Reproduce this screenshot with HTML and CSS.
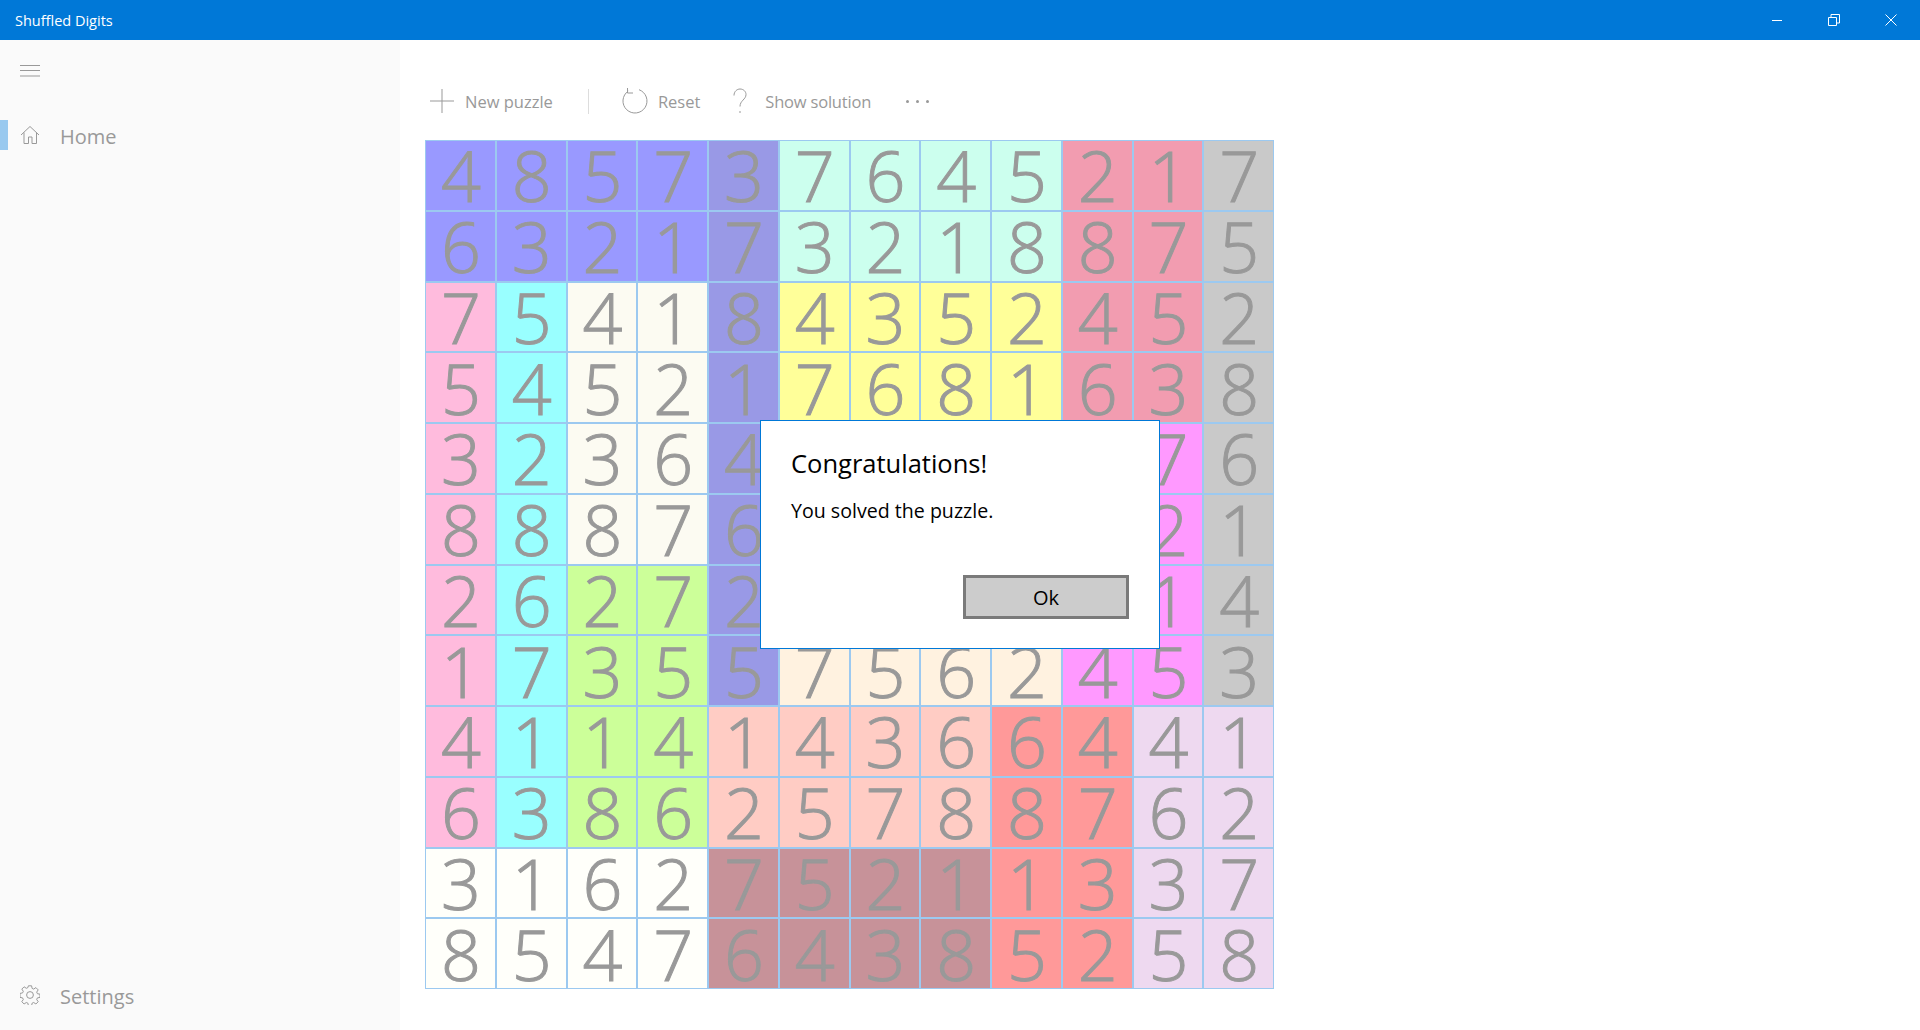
FILE: index.html
```html
<!DOCTYPE html>
<html lang="en">
<head>
  <meta charset="UTF-8">
  <title>Shuffled Digits</title>
  <link rel="stylesheet" href="styles.css">
</head>
<body>
  <div id="app">

    <!-- Title bar -->
    <div id="title-bar">
      <span class="app-name">Shuffled Digits</span>
      <div class="win-btns">
        <svg class="win-btn" viewBox="0 0 12 12"><path d="M1 6.5h10" /></svg>
        <svg class="win-btn" viewBox="0 0 12 12"><path d="M.5 3.500h8v8h-8z M3 3.500v-3h8.500v8.500h-3" /></svg>
        <svg class="win-btn" viewBox="0 0 12 12"><path d="M.5.5l11 11 M11.5.5l-11 11" /></svg>
      </div>
    </div>

    <div id="content">

      <!-- Navigation pane -->
      <div id="nav">
        <div class="nav-top">
          <svg class="hamburger" viewBox="0 0 20 12"><path d="M0 .5h20 M0 5.5h20 M0 11h20" /></svg>
          <div class="nav-item selected">
            <svg class="nav-icon" viewBox="0 0 20 20"><path d="M1 10L10 1.5 19 10 M4 7.5V18.500h4.500V12h3.500v6.500h4.500V7.500" /></svg>
            <span>Home</span>
          </div>
        </div>
        <div class="nav-item">
          <svg class="nav-icon" viewBox="0 0 20 20"><circle cx="10" cy="10" r="3.4" /><path d="M8.4.8h3.2l.5 2.600 1.600.7 2.200-1.500 2.300 2.300-1.500 2.200.7 1.600 2.600.5v3.200l-2.600.5-.7 1.600 1.500 2.200-2.300 2.300-2.200-1.500-1.600.7-.5 2.600H8.400l-.5-2.600-1.600-.7-2.200 1.500-2.300-2.300 1.500-2.200-.7-1.600-2.600-.5V8.400l2.600-.5.7-1.600-1.500-2.200 2.300-2.300 2.200 1.500 1.600-.7z" /></svg>
          <span>Settings</span>
        </div>
      </div>

      <!-- Main page -->
      <div id="main">
        <div id="toolbar">
          <div class="tool tool-new">
            <svg class="tool-icon" viewBox="0 0 26 26"><path d="M13 1v24 M1 13h24" /></svg>
            <span>New puzzle</span>
          </div>
          <div class="tool-sep"></div>
          <div class="tool tool-reset">
            <svg class="tool-icon" viewBox="0 0 26 26"><path d="M6.200 3.100A12 12 0 1 0 17 1.700 M5.500 0v5h5.500" /></svg>
            <span>Reset</span>
          </div>
          <div class="tool tool-help">
            <svg class="tool-icon" viewBox="0 0 26 26"><path d="M7 7.500C7 3.500 10 1 13 1c3.500 0 6 2.500 6 5.500 0 5-6 6-6 12" /><path d="M13 23v2" /></svg>
            <span>Show solution</span>
          </div>
          <div class="more"><i></i><i></i><i></i></div>
        </div>

        <div id="board">
          <div class="cell violet">4</div><div class="cell violet">8</div><div class="cell violet">5</div><div class="cell violet">7</div><div class="cell dusk">3</div><div class="cell mint">7</div><div class="cell mint">6</div><div class="cell mint">4</div><div class="cell mint">5</div><div class="cell rose">2</div><div class="cell rose">1</div><div class="cell grey">7</div>
          <div class="cell violet">6</div><div class="cell violet">3</div><div class="cell violet">2</div><div class="cell violet">1</div><div class="cell dusk">7</div><div class="cell mint">3</div><div class="cell mint">2</div><div class="cell mint">1</div><div class="cell mint">8</div><div class="cell rose">8</div><div class="cell rose">7</div><div class="cell grey">5</div>
          <div class="cell pink">7</div><div class="cell cyan">5</div><div class="cell ivory">4</div><div class="cell ivory">1</div><div class="cell dusk">8</div><div class="cell yellow">4</div><div class="cell yellow">3</div><div class="cell yellow">5</div><div class="cell yellow">2</div><div class="cell rose">4</div><div class="cell rose">5</div><div class="cell grey">2</div>
          <div class="cell pink">5</div><div class="cell cyan">4</div><div class="cell ivory">5</div><div class="cell ivory">2</div><div class="cell dusk">1</div><div class="cell yellow">7</div><div class="cell yellow">6</div><div class="cell yellow">8</div><div class="cell yellow">1</div><div class="cell rose">6</div><div class="cell rose">3</div><div class="cell grey">8</div>
          <div class="cell pink">3</div><div class="cell cyan">2</div><div class="cell ivory">3</div><div class="cell ivory">6</div><div class="cell dusk">4</div><div class="cell cream">1</div><div class="cell cream">8</div><div class="cell cream">3</div><div class="cell cream">7</div><div class="cell magenta">5</div><div class="cell magenta">7</div><div class="cell grey">6</div>
          <div class="cell pink">8</div><div class="cell cyan">8</div><div class="cell ivory">8</div><div class="cell ivory">7</div><div class="cell dusk">6</div><div class="cell cream">3</div><div class="cell cream">4</div><div class="cell cream">2</div><div class="cell cream">5</div><div class="cell magenta">1</div><div class="cell magenta">2</div><div class="cell grey">1</div>
          <div class="cell pink">2</div><div class="cell cyan">6</div><div class="cell lime">2</div><div class="cell lime">7</div><div class="cell dusk">2</div><div class="cell cream">8</div><div class="cell cream">1</div><div class="cell cream">4</div><div class="cell cream">3</div><div class="cell magenta">6</div><div class="cell magenta">1</div><div class="cell grey">4</div>
          <div class="cell pink">1</div><div class="cell cyan">7</div><div class="cell lime">3</div><div class="cell lime">5</div><div class="cell dusk">5</div><div class="cell cream">7</div><div class="cell cream">5</div><div class="cell cream">6</div><div class="cell cream">2</div><div class="cell magenta">4</div><div class="cell magenta">5</div><div class="cell grey">3</div>
          <div class="cell pink">4</div><div class="cell cyan">1</div><div class="cell lime">1</div><div class="cell lime">4</div><div class="cell salmon">1</div><div class="cell salmon">4</div><div class="cell salmon">3</div><div class="cell salmon">6</div><div class="cell red">6</div><div class="cell red">4</div><div class="cell lavender">4</div><div class="cell lavender">1</div>
          <div class="cell pink">6</div><div class="cell cyan">3</div><div class="cell lime">8</div><div class="cell lime">6</div><div class="cell salmon">2</div><div class="cell salmon">5</div><div class="cell salmon">7</div><div class="cell salmon">8</div><div class="cell red">8</div><div class="cell red">7</div><div class="cell lavender">6</div><div class="cell lavender">2</div>
          <div class="cell white">3</div><div class="cell white">1</div><div class="cell white">6</div><div class="cell white">2</div><div class="cell brown">7</div><div class="cell brown">5</div><div class="cell brown">2</div><div class="cell brown">1</div><div class="cell red">1</div><div class="cell red">3</div><div class="cell lavender">3</div><div class="cell lavender">7</div>
          <div class="cell white">8</div><div class="cell white">5</div><div class="cell white">4</div><div class="cell white">7</div><div class="cell brown">6</div><div class="cell brown">4</div><div class="cell brown">3</div><div class="cell brown">8</div><div class="cell red">5</div><div class="cell red">2</div><div class="cell lavender">5</div><div class="cell lavender">8</div>
        </div>
      </div>
    </div>

    <!-- Message dialog -->
    <div id="dialog">
      <div class="dialog-title">Congratulations!</div>
      <div class="dialog-text">You solved the puzzle.</div>
      <div class="dialog-actions">
        <button class="dialog-btn">Ok</button>
      </div>
    </div>

  </div>
</body>
</html>
```

FILE: styles.css
```css
html, body {
  margin: 0;
  padding: 0;
  height: 100%;
  background: #fff;
  overflow: hidden;
}

#app {
  position: relative;
  height: 100%;
  display: flex;
  flex-direction: column;
  font-family: "Open Sans", "Noto Sans", sans-serif;
}

/* title bar */
#title-bar {
  height: 40px;
  flex: none;
  display: flex;
  align-items: center;
  justify-content: space-between;
  background: #0078d7;
  color: #fff;
  padding-left: 15px;
}
.app-name {
  font-size: 14.5px;
}
.win-btns {
  display: flex;
  padding-right: 23px;
  gap: 45px;
}
.win-btn {
  width: 12px;
  height: 12px;
  fill: none;
  stroke: #fff;
  stroke-width: 1;
}

#content {
  flex: 1;
  display: flex;
  min-height: 0;
}

/* navigation pane */
#nav {
  width: 400px;
  flex: none;
  box-sizing: border-box;
  display: flex;
  flex-direction: column;
  justify-content: space-between;
  background: #fafafa;
  padding-bottom: 20px;
}
.hamburger {
  display: block;
  width: 20px;
  height: 12px;
  margin: 25px 0 43px 20px;
  fill: none;
  stroke: #999;
  stroke-width: 1;
}
.nav-item {
  position: relative;
  height: 30px;
  display: flex;
  align-items: center;
  gap: 20px;
  padding-left: 20px;
  font-size: 20px;
  color: #999;
}
.nav-item span {
  position: relative;
  top: 1px;
}
.nav-item.selected::before {
  content: "";
  position: absolute;
  left: 0;
  top: 0;
  bottom: 0;
  width: 8px;
  background: #99c9ef;
}
.nav-icon {
  width: 20px;
  height: 20px;
  fill: none;
  stroke: #999;
  stroke-width: 1;
}

/* page */
#main {
  flex: 1;
  padding-left: 25px;
}

#toolbar {
  height: 100px;
  display: flex;
  align-items: center;
  color: #999;
  font-size: 16.500px;
  padding: 22px 0 0 4px;
  box-sizing: border-box;
}
.tool {
  display: flex;
  align-items: center;
  gap: 10px;
}
.tool-icon {
  width: 26px;
  height: 26px;
  fill: none;
  stroke: #999;
  stroke-width: 1;
}
.tool-sep {
  width: 1px;
  height: 25px;
  background: #ddd;
  margin: 0 33px 0 35px;
}
.tool-help {
  margin-left: 33px;
  letter-spacing: -0.2px;
}
.tool-help .tool-icon {
  margin-right: 2px;
  margin-left: -6px;
}
.more {
  display: flex;
  gap: 7px;
  margin-left: 35px;
}
.more i {
  width: 3px;
  height: 3px;
  border-radius: 50%;
  background: #999;
}

/* puzzle */
#board {
  display: grid;
  grid-template-columns: repeat(12, 70.75px);
  grid-auto-rows: 70.75px;
  width: 849px;
}
.cell {
  box-sizing: border-box;
  display: flex;
  align-items: center;
  justify-content: center;
  border: 1px solid #9cc9f0;
  padding-left: 1px;
  font-size: 70px;
  font-weight: 300;
  -webkit-text-stroke: 1px #999;
  line-height: 1;
  color: #999;
}
.violet { background: #9999ff; }
.dusk { background: #9999e6; }
.mint { background: #ccffee; }
.rose { background: #f29cb0; }
.grey { background: #c9c9c9; }
.pink { background: #ffbbdd; }
.cyan { background: #99ffff; }
.ivory { background: #fcfbf2; }
.yellow { background: #ffff99; }
.cream { background: #fff2e0; }
.magenta { background: #ff99ff; }
.lime { background: #ccff99; }
.salmon { background: #ffccc4; }
.red { background: #ff9999; }
.lavender { background: #eed9f0; }
.white { background: #fffffa; }
.brown { background: #c79299; }

/* dialog */
#dialog {
  position: absolute;
  left: 760px;
  top: 420px;
  width: 400px;
  height: 229px;
  box-sizing: border-box;
  display: flex;
  flex-direction: column;
  background: #fff;
  border: 1px solid #0078d7;
  padding: 25px 30px 29px;
  color: #000;
}
.dialog-title {
  font-size: 25.500px;
  line-height: 34px;
}
.dialog-text {
  font-size: 19.600px;
  line-height: 26px;
  margin-top: 18px;
}
.dialog-actions {
  margin-top: auto;
  display: flex;
  justify-content: flex-end;
}
.dialog-btn {
  width: 166px;
  height: 44px;
  background: #ccc;
  border: 3px solid #7a7a7a;
  font: inherit;
  font-size: 20px;
  color: #000;
  padding: 0;
}
```
